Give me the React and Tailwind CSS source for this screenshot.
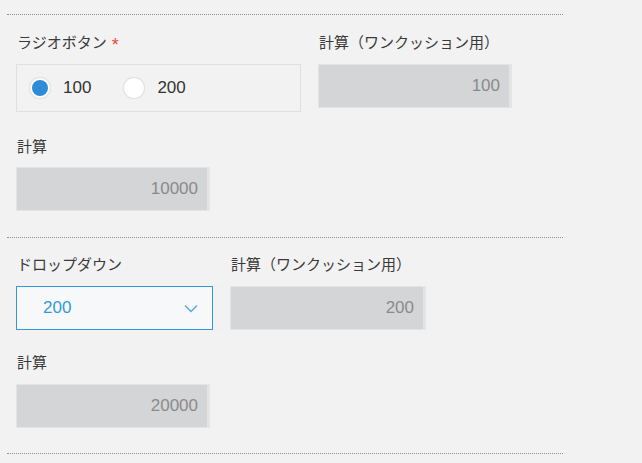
import React from "react";

const font = { fontFamily: '"Liberation Sans", "Noto Sans CJK JP", sans-serif' };

function Label({ children, required }) {
  return (
    <div className="h-5 flex items-center text-[15px] leading-5 text-[#3a3a3a]">
      <span>{children}</span>
      {required && <span className="ml-[5px] text-[#e74c3c] text-[18px] leading-5 mt-[3px]">*</span>}
    </div>
  );
}

function CalcField({ value, width }) {
  return (
    <div
      className={`${width} h-[44px] bg-[#d4d5d7] border border-[#e3e4e4] border-r-[3px] flex items-center justify-end pr-[9px] text-[17px] text-[#8a8a8a]`}
    >
      {value}
    </div>
  );
}

function Radio({ checked, label }) {
  return (
    <div className="flex items-center">
      <div className="w-[22px] h-[22px] rounded-full bg-white border border-[#e0e2e2] shadow-[0_0_1px_rgba(0,0,0,0.08)] flex items-center justify-center">
        {checked && <div className="w-[16px] h-[16px] rounded-full bg-[#2e8bd6]" />}
      </div>
      <span className="ml-[12px] text-[17px] text-[#333]">{label}</span>
    </div>
  );
}

export default function App() {
  return (
    <div className="w-[642px] h-[463px] bg-[#f2f2f2] pt-[14px] pl-[7px] overflow-hidden" style={font}>
      {/* Section 1 */}
      <div className="w-[556px] border-t border-dotted border-[#8f8f8f] pl-[9px] pt-[18px] pb-[26px]">
        <div className="flex gap-[17px]">
          <div>
            <div className="pl-[1px]">
              <Label required>ラジオボタン</Label>
            </div>
            <div className="mt-[11px] w-[285px] h-[48px] border border-[#dde1e1] flex items-center pl-[12px]">
              <Radio checked label="100" />
              <div className="ml-[32px]">
                <Radio label="200" />
              </div>
            </div>
          </div>
          <div>
            <div className="pl-[1px]">
              <Label>計算（ワンクッション用）</Label>
            </div>
            <div className="mt-[11px]">
              <CalcField value="100" width="w-[194px]" />
            </div>
          </div>
        </div>
        <div className="mt-[25px]">
          <div className="pl-[1px]">
            <Label>計算</Label>
          </div>
          <div className="mt-[10px]">
            <CalcField value="10000" width="w-[194px]" />
          </div>
        </div>
      </div>

      {/* Section 2 */}
      <div className="w-[556px] border-t border-dotted border-[#8f8f8f] pl-[9px] pt-[17px] pb-[25px]">
        <div className="flex gap-[17px]">
          <div>
            <div className="pl-[1px]">
              <Label>ドロップダウン</Label>
            </div>
            <div className="mt-[11px] w-[197px] h-[44px] border border-[#3498db] bg-[#f6f8fa] flex items-center justify-between pl-[26px] pr-[14px]">
              <span className="text-[17px] text-[#3498db]">200</span>
              <svg width="14" height="9" viewBox="0 0 14 9" fill="none">
                <path d="M1 1.5 L7 7.5 L13 1.5" stroke="#5aa8e0" strokeWidth="1.4" />
              </svg>
            </div>
          </div>
          <div>
            <div className="pl-[1px]">
              <Label>計算（ワンクッション用）</Label>
            </div>
            <div className="mt-[11px]">
              <CalcField value="200" width="w-[196px]" />
            </div>
          </div>
        </div>
        <div className="mt-[23px]">
          <div className="pl-[1px]">
            <Label>計算</Label>
          </div>
          <div className="mt-[11px]">
            <CalcField value="20000" width="w-[194px]" />
          </div>
        </div>
      </div>
      <div className="w-[556px] border-t border-dotted border-[#8f8f8f]" />
    </div>
  );
}
